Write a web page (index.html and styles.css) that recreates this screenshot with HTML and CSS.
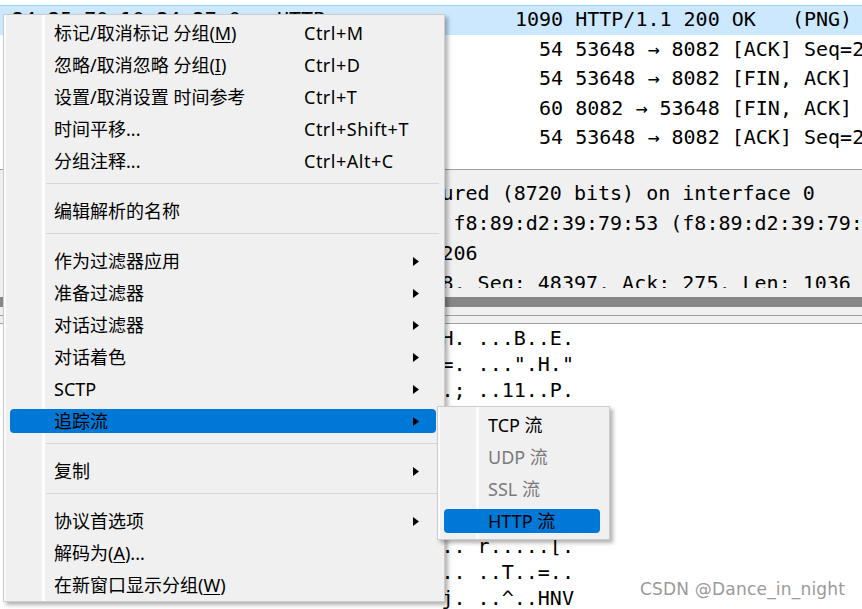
FILE: index.html
```html
<!DOCTYPE html>
<html lang="zh-CN">
<head>
<meta charset="utf-8">
<title>Wireshark context menu</title>
<link rel="stylesheet" href="styles.css">
</head>
<body>
<div class="app">
  <div class="packets">
    <div class="row sel"><span class="c1">24 25 70 10 24 27 0   HTTP</span><span class="c2">1090 HTTP/1.1 200 OK   (PNG)</span></div>
    <div class="row"><span class="c1">24 25 71 10 24 27 2   TCP</span><span class="c2">  54 53648 → 8082 [ACK] Seq=275 Ack=49433 Win=131072 Len=0</span></div>
    <div class="row"><span class="c1">24 25 72 10 24 27 2   TCP</span><span class="c2">  54 53648 → 8082 [FIN, ACK] Seq=275 Ack=49433 Win=131072 Len=0</span></div>
    <div class="row"><span class="c1">24 25 73 10 66 1 206   TCP</span><span class="c2">  60 8082 → 53648 [FIN, ACK] Seq=49433 Ack=276 Win=30336 Len=0</span></div>
    <div class="row"><span class="c1">24 25 74 10 24 27 2   TCP</span><span class="c2">  54 53648 → 8082 [ACK] Seq=276 Ack=49434 Win=131072 Len=0</span></div>
  </div>
  <div class="details">
    <div class="dl">on wire (8720 bits), 1090 bytes captured (8720 bits) on interface 0</div>
    <div class="dl">net II, Src: e0:24:7f:3c:5e:81, Dst: f8:89:d2:39:79:53 (f8:89:d2:39:79:53)</div>
    <div class="dl">Version 4, Src: 10.24.27.2, Dst: 10.206</div>
    <div class="dl">ocol, Src Port: 8082, Dst Port: 53648, Seq: 48397, Ack: 275, Len: 1036</div>
  </div>
  <div class="split">
    <div class="bar"></div>
    <div class="track"></div>
  </div>
  <div class="bytes">
    <div class="bl">0000  f8 89 d2 39 79 53 e0 24 ..9yS.H. ...B..E.</div>
    <div class="bl">0010  04 34 a5 b4 40 00 80 06 ...4..=. ...".H."</div>
    <div class="bl">0020  1a 1e 1f 92 d1 50 0d 3b ....P..; ..11..P.</div>
    <div class="bl">0030  ff 5c 8d 0d 00 00 48 54 ......HT TP/1.1 2</div>
    <div class="bl">0040  30 30 20 4f 4b 0d 0a 43 00 OK..C ontent-T</div>
    <div class="bl">0050  79 70 65 3a 20 69 6d 61 ype: ima ge/png..</div>
    <div class="bl">0060  43 6f 6e 74 65 6e 74 2d Content- Length:</div>
    <div class="bl">0070  20 37 39 32 0d 0a 0d 0a  792.... .PNG....</div>
    <div class="bl">0080  00 00 00 0d 49 48 44 52 ........ r.....[.</div>
    <div class="bl">0090  00 00 00 14 00 00 00 14 ........ ..T..=..</div>
    <div class="bl">                                    j. ..^..HNV</div>
  </div>

  <div class="menu main-menu">
    <div class="mi"><span class="lb">标记/取消标记 分组(<u>M</u>)</span><span class="sc">Ctrl+M</span></div>
    <div class="mi"><span class="lb">忽略/取消忽略 分组(<u>I</u>)</span><span class="sc">Ctrl+D</span></div>
    <div class="mi"><span class="lb">设置/取消设置 时间参考</span><span class="sc">Ctrl+T</span></div>
    <div class="mi"><span class="lb">时间平移...</span><span class="sc">Ctrl+Shift+T</span></div>
    <div class="mi"><span class="lb">分组注释...</span><span class="sc">Ctrl+Alt+C</span></div>
    <div class="sep"></div>
    <div class="mi"><span class="lb">编辑解析的名称</span></div>
    <div class="sep"></div>
    <div class="mi"><span class="lb">作为过滤器应用</span><svg class="arr" width="6" height="9" viewBox="0 0 6 9"><polygon points="0,0 6,4.5 0,9"/></svg></div>
    <div class="mi"><span class="lb">准备过滤器</span><svg class="arr" width="6" height="9" viewBox="0 0 6 9"><polygon points="0,0 6,4.5 0,9"/></svg></div>
    <div class="mi"><span class="lb">对话过滤器</span><svg class="arr" width="6" height="9" viewBox="0 0 6 9"><polygon points="0,0 6,4.5 0,9"/></svg></div>
    <div class="mi"><span class="lb">对话着色</span><svg class="arr" width="6" height="9" viewBox="0 0 6 9"><polygon points="0,0 6,4.5 0,9"/></svg></div>
    <div class="mi"><span class="lb">SCTP</span><svg class="arr" width="6" height="9" viewBox="0 0 6 9"><polygon points="0,0 6,4.5 0,9"/></svg></div>
    <div class="mi act"><span class="lb">追踪流</span><svg class="arr" width="6" height="9" viewBox="0 0 6 9"><polygon points="0,0 6,4.5 0,9"/></svg></div>
    <div class="sep"></div>
    <div class="mi"><span class="lb">复制</span><svg class="arr" width="6" height="9" viewBox="0 0 6 9"><polygon points="0,0 6,4.5 0,9"/></svg></div>
    <div class="sep"></div>
    <div class="mi"><span class="lb">协议首选项</span><svg class="arr" width="6" height="9" viewBox="0 0 6 9"><polygon points="0,0 6,4.5 0,9"/></svg></div>
    <div class="mi"><span class="lb">解码为(<u>A</u>)...</span></div>
    <div class="mi"><span class="lb">在新窗口显示分组(<u>W</u>)</span></div>
  </div>

  <div class="menu sub-menu">
    <div class="mi"><span>TCP 流</span></div>
    <div class="mi dis"><span>UDP 流</span></div>
    <div class="mi dis"><span>SSL 流</span></div>
    <div class="mi act"><span>HTTP 流</span></div>
  </div>

  <div class="wm">CSDN @Dance_in_night</div>
</div>
</body>
</html>
```

FILE: styles.css
```css
html, body {
  margin: 0;
  padding: 0;
  background: #ffffff;
}

.app {
  position: relative;
  width: 862px;
  height: 609px;
  overflow: hidden;
  font-family: "DejaVu Sans Mono", "Liberation Mono", monospace;
  font-size: 20px;
  color: #000000;
}

/* packet list */
.packets {
  height: 170px;
  box-sizing: border-box;
  padding-top: 5px;
  border-bottom: 1px solid #a0a0a0;
  overflow: hidden;
}

.row {
  display: flex;
  height: 29.5px;
  line-height: 29.5px;
  padding-left: 12px;
  white-space: pre;
}

.row.sel {
  background: #cce8ff;
  box-shadow: inset 0 1px 0 #99d1ff;
}

.c1 {
  flex: none;
  width: 503px;
  overflow: hidden;
}

.c2 {
  flex: none;
}

/* packet details */
.details {
  height: 118px;
  box-sizing: border-box;
  padding: 8px 0 0 8px;
  background: #f0f0f0;
  overflow: hidden;
}

.dl {
  height: 30px;
  line-height: 30px;
  white-space: pre;
}

/* splitter / scrollbar strip */
.split {
  background: #f0f0f0;
  padding-top: 9px;
}

.bar {
  height: 10px;
  background: #878787;
}

.track {
  height: 7px;
  margin-top: 8px;
  border-top: 1px solid #a0a0a0;
  border-bottom: 1px solid #a0a0a0;
}

/* packet bytes */
.bytes {
  padding: 1px 0 0 8px;
}

.bl {
  height: 26px;
  line-height: 26px;
  white-space: pre;
}

/* context menus */
.menu {
  position: absolute;
  display: flex;
  flex-direction: column;
  box-sizing: border-box;
  border: 1px solid #cccccc;
  padding: 2px 0 0;
  background: linear-gradient(90deg, #fbfbfb 2px, #f0f0f0 2px, #f0f0f0 38px, #fcfcfc 38px, #fcfcfc 41px, #f0f0f0 41px);
  box-shadow: 3px 3px 4px rgba(0, 0, 0, 0.3);
  font-family: "Noto Sans", "Noto Sans CJK SC", sans-serif;
  font-size: 18px;
  color: #000000;
}

.main-menu {
  left: 3px;
  top: 14px;
  width: 442px;
}

.sub-menu {
  left: 437px;
  top: 406px;
  width: 173px;
  padding-bottom: 2px;
}

.mi {
  display: flex;
  align-items: center;
  flex: none;
  height: 24px;
  line-height: 24px;
  margin: 4px 8px 4px 6px;
  padding: 0 17px 0 44px;
  border-radius: 4px;
  white-space: nowrap;
}

.sub-menu .mi {
  margin-right: 9px;
}

.lb {
  flex: none;
  width: 250px;
}

.sc {
  letter-spacing: 0.5px;
}

.arr {
  margin-left: auto;
  display: block;
  fill: #000000;
}

.mi u {
  text-decoration: underline;
  text-underline-offset: 2px;
}

.mi.act {
  background: #0078d7;
}

.mi.dis {
  color: #7a7a7a;
}

.sep {
  flex: none;
  height: 1px;
  margin: 6px 5px 11px 42px;
  background: #d7d7d7;
}

/* watermark */
.wm {
  position: absolute;
  left: 640px;
  top: 579px;
  font-family: "DejaVu Sans", sans-serif;
  font-size: 17px;
  line-height: 20px;
  letter-spacing: 0.2px;
  color: #9a9a9a;
}
```
